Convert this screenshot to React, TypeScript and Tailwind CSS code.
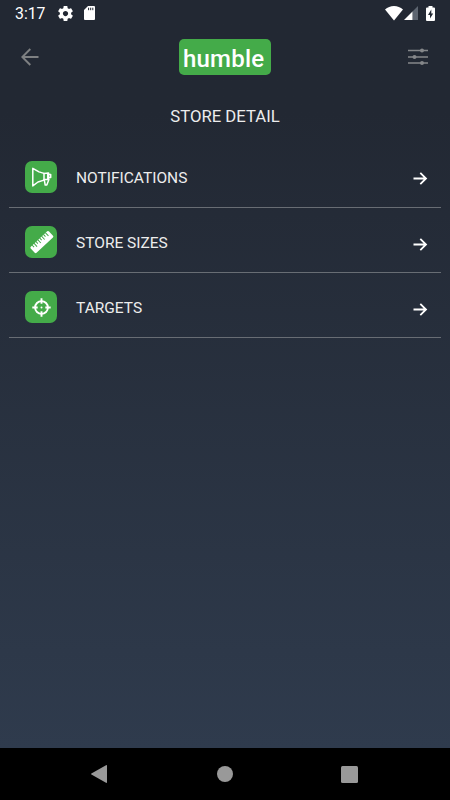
import type { ReactNode } from "react";

function MegaphoneIcon() {
  return (
    <svg width="32" height="32" viewBox="0 0 32 32" fill="none" stroke="#fff" strokeWidth="1.5" strokeLinejoin="round" strokeLinecap="round">
      <path d="M7.8 7.3v17.6l5.2-3.9 6-1.9V12.4l-5-1.5z" />
      <path d="M19 12.4l4.6-.4v6.6H19" />
      <path d="M19.3 19l.9 5h1.6l2-5.2" />
      <path d="M22.8 12.5v6M24 13.4h1.7v3.2H24" />
    </svg>
  );
}

function RulerIcon() {
  return (
    <svg width="32" height="32" viewBox="0 0 32 32">
      <g transform="rotate(-43 16.8 16)">
        <rect x="4.3" y="11.9" width="25" height="8.4" rx="1.3" fill="#fff" />
        <path d="M7.6 11.5v3M10.2 11.5v4.6M12.8 11.5v3M15.4 11.5v4.6M18 11.5v3M20.6 11.5v4.6M23.2 11.5v3M25.8 11.5v4.6" stroke="#44ab49" strokeWidth="1" />
      </g>
    </svg>
  );
}

function TargetIcon() {
  return (
    <svg width="32" height="32" viewBox="0 0 32 32" fill="none" stroke="#fff">
      <circle cx="16.5" cy="16.5" r="6.4" strokeWidth="1.9" />
      <path d="M16.5 7.3v5.4M16.5 20.3v5.4M7.3 16.5h5.4M20.3 16.5h5.4" strokeWidth="1.9" />
      <circle cx="16.5" cy="16.5" r="1" fill="#fff" stroke="none" />
    </svg>
  );
}

const items: { label: string; icon: ReactNode }[] = [
  { label: "NOTIFICATIONS", icon: <MegaphoneIcon /> },
  { label: "STORE SIZES", icon: <RulerIcon /> },
  { label: "TARGETS", icon: <TargetIcon /> },
];

function StatusBar() {
  return (
    <div className="flex h-[27px] items-center justify-between px-[15px]">
      <div className="flex items-center">
        <span className="w-[43px] pt-px text-[15.8px] leading-none text-white">3:17</span>
        <svg width="15" height="15" viewBox="2 2 20 20" fill="#fff">
          <path d="M19.43 12.98c.04-.32.07-.64.07-.98s-.03-.66-.07-.98l2.11-1.65c.19-.15.24-.42.12-.64l-2-3.46c-.12-.22-.39-.3-.61-.22l-2.49 1c-.52-.4-1.08-.73-1.69-.98l-.38-2.65C14.46 2.18 14.25 2 14 2h-4c-.25 0-.46.18-.49.42l-.38 2.65c-.61.25-1.17.59-1.69.98l-2.49-1c-.23-.09-.49 0-.61.22l-2 3.46c-.13.22-.07.49.12.64l2.11 1.65c-.04.32-.07.65-.07.98s.03.66.07.98l-2.11 1.65c-.19.15-.24.42-.12.64l2 3.46c.12.22.39.3.61.22l2.49-1c.52.4 1.08.73 1.69.98l.38 2.65c.03.24.24.42.49.42h4c.25 0 .46-.18.49-.42l.38-2.65c.61-.25 1.17-.59 1.69-.98l2.49 1c.23.09.49 0 .61-.22l2-3.46c.12-.22.07-.49-.12-.64l-2.11-1.65zM12 15.5c-1.93 0-3.5-1.57-3.5-3.5s1.57-3.5 3.5-3.5 3.5 1.57 3.5 3.5-1.57 3.5-3.5 3.5z" />
        </svg>
        <svg className="ml-[11px]" width="11" height="14" viewBox="0 0 11 14">
          <path d="M4 0h6a1 1 0 0 1 1 1v12a1 1 0 0 1-1 1H1a1 1 0 0 1-1-1V4z" fill="#fff" />
          <path d="M4.6 1.7v2.5M6.7 1.7v2.5M8.8 1.7v2.5" stroke="#222833" strokeWidth="1" />
        </svg>
      </div>
      <div className="flex items-center pb-px">
        <svg width="18" height="15" viewBox="0 0 18 15">
          <path d="M9 14.500L0 3.500C2.600 1.300 5.600 0 9 0s6.400 1.300 9 3.500z" fill="#fff" />
        </svg>
        <svg className="ml-px" width="14" height="14" viewBox="0 0 14 14">
          <path d="M8.5 5.5L14 0v14H8.5z" fill="#5d6570" />
          <path d="M0 14L8.5 5.5V14z" fill="#fff" />
        </svg>
        <svg className="ml-2" width="9" height="15" viewBox="0 0 9 15">
          <path d="M2.5 1.5V0h4v1.5H8a1 1 0 0 1 1 1V14a1 1 0 0 1-1 1H1a1 1 0 0 1-1-1V2.5a1 1 0 0 1 1-1z" fill="#fff" />
          <path d="M5.3 3.6L2 9h2v3.6L7.2 7.4H5.300z" fill="#222833" />
        </svg>
      </div>
    </div>
  );
}

function Header() {
  return (
    <header className="flex h-[60px] items-center justify-between pl-[21px] pr-[22px]">
      <svg width="18" height="18" viewBox="0 0 18 18" fill="none" stroke="#7e8082" strokeWidth="1.9">
        <path d="M17.5 9H1.5M9.3 1L1.3 9l8 8" />
      </svg>
      <div className="ml-[3px] flex h-9 w-[92px] items-center rounded-[5px] bg-[#44ab49] pl-1 pt-[3px]">
        <span className="text-[24px] font-medium leading-none tracking-[0.2px] text-white">humble</span>
      </div>
      <svg width="20" height="18" viewBox="0 0 20 18" stroke="#85878a" strokeWidth="1.3">
        <path d="M0 2.5h20M0 9h20M0 15h20" />
        <g fill="#85878a" stroke="none">
          <circle cx="14" cy="2.5" r="2" />
          <circle cx="6.5" cy="9" r="2" />
          <circle cx="14" cy="15" r="2" />
        </g>
      </svg>
    </header>
  );
}

function NavBar() {
  return (
    <nav className="flex h-[52px] items-center justify-between bg-black pl-[91px] pr-[92px]">
      <svg width="16" height="18" viewBox="0 0 16 18" fill="#999">
        <path d="M.4 8.4L15 .2q1-.4 1 .6v16.4q0 1-1 .6L.4 9.6q-.7-.6 0-1.2z" />
      </svg>
      <div className="ml-px size-4 rounded-full bg-[#999]" />
      <div className="size-[17px] rounded-[1.5px] bg-[#999]" />
    </nav>
  );
}

export default function App() {
  return (
    <div className="flex h-[800px] w-[450px] flex-col overflow-hidden bg-[#222833] font-['Roboto',sans-serif]">
      <div className="flex flex-1 flex-col bg-linear-to-b from-[#222833] from-15% to-[#2f3b4d]">
        <StatusBar />
        <Header />
        <h1 className="h-[55.4px] pt-[18px] text-center text-[16.7px] leading-6 text-[#ededed]">STORE DETAIL</h1>
        <ul className="px-[9px]">
          {items.map((item) => (
            <li key={item.label} className="flex h-[65.2px] items-center border-b border-[#686d74] pl-4 pr-[13px] pt-[5px]">
              <div className="size-8 rounded-[7px] bg-[#44ab49]">{item.icon}</div>
              <span className="ml-[19px] flex-1 pt-[3px] text-[15.5px] text-[#ededed]">{item.label}</span>
              <svg className="mt-1" width="15" height="15" viewBox="0 0 15 15" fill="none" stroke="#fff" strokeWidth="1.8">
                <path d="M.5 7.5h12.500M7.300 1.800l5.700 5.700-5.700 5.700" />
              </svg>
            </li>
          ))}
        </ul>
      </div>
      <NavBar />
    </div>
  );
}
